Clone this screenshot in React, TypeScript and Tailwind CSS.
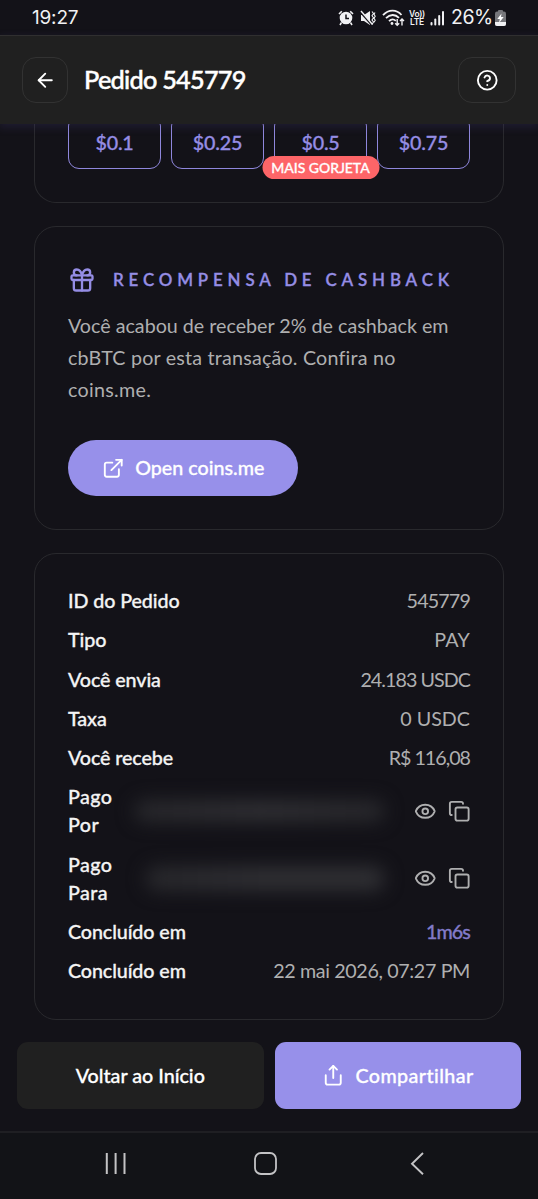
import type { ReactNode } from "react";
import { ArrowLeft, CircleQuestionMark, Copy, ExternalLink, Eye, Gift, Share } from "lucide-react";

function StatusBar() {
  return (
    <div className="flex h-[35px] shrink-0 items-center justify-between pl-[32px] pr-[32px] font-['Inter',sans-serif] text-[#f1f1f3]">
      <span className="text-[19px] leading-none tracking-[-0.2px]">19:27</span>
      <div className="flex items-center">
        <svg className="h-4 w-4" viewBox="0 0 16 16" fill="none">
          <circle cx="8" cy="8" r="6.3" fill="#f1f1f3" />
          <path d="M1 4 3.8 1.2M15 4l-2.8-2.8M3.4 12.6 2 15M12.6 12.6 14 15" stroke="#f1f1f3" strokeWidth="1.6" />
          <path d="M8 4.5V8.5H11" stroke="#131218" strokeWidth="1.5" />
        </svg>
        <svg className="ml-[6px] h-4 w-4" viewBox="0 0 16 16" fill="none">
          <path d="M1 5h3l6-4v14l-6-4H1z" fill="#f1f1f3" />
          <path d="M0 1.5 12 15" stroke="#131218" strokeWidth="2" />
          <path d="M1 1 12.5 14.5" stroke="#f1f1f3" strokeWidth="1.4" />
          <path d="m12 1.5 1.5 2L12 5.7l1.5 2.1L12 10l1.5 2-1.5 2.5M15 2.5l-1 1.7 1.2 2-1.2 2 1.2 2-1.2 2" stroke="#f1f1f3" strokeWidth="1.1" />
        </svg>
        <svg className="ml-[6px] h-[18px] w-[23px]" viewBox="0 0 23 18" fill="none" stroke="#f1f1f3">
          <path d="M1 6.2C6.5.2 14.5.2 19.5 6M4 9.2c4-4.2 9.3-4.2 13-.3M7 12.2c2.2-2.3 4.7-2.3 6.8-.4" strokeWidth="1.8" />
          <circle cx="10" cy="14.5" r="1.4" fill="#f1f1f3" stroke="none" />
          <path d="M15.2 10v6.3m-2-2 2 2 2-2M20 16.5V10m-2 2 2-2 2 2" strokeWidth="1.4" />
        </svg>
        <div className="ml-[4px] flex w-[16px] flex-col items-center text-[8.5px] font-semibold leading-[8px] tracking-[-0.3px]">
          <span>Vo))</span>
          <span>LTE</span>
        </div>
        <svg className="ml-[5px] h-4 w-[15px]" viewBox="0 0 15 16" fill="#f1f1f3">
          <rect x="0.5" y="12" width="2" height="3.5" rx="1" />
          <rect x="4.3" y="8.5" width="2" height="7" rx="1" />
          <rect x="8.2" y="5" width="2" height="10.5" rx="1" />
          <rect x="12" y="1" width="2" height="14.5" rx="1" />
        </svg>
        <span className="ml-[6px] w-[44px] text-[19.5px] leading-none tracking-[-0.5px]">26%</span>
        <svg className="h-[16px] w-[11px]" viewBox="0 0 11 16">
          <rect x="3" width="5" height="3" rx="1" fill="#77777b" />
          <rect y="1.5" width="11" height="14.5" rx="2" fill="#77777b" />
          <path d="M0 12h11v2a2 2 0 0 1-2 2H2a2 2 0 0 1-2-2z" fill="#f1f1f3" />
          <path d="M6.5 3.5 2.3 9h2.5L4 13l4.7-6H6z" fill="#fff" />
        </svg>
      </div>
    </div>
  );
}

function Header() {
  return (
    <header className="relative z-10 flex h-[89px] shrink-0 items-center border-t border-[#302f30] bg-[#202020] pl-[22px] pr-[22px] shadow-[0_3px_8px_1px_rgba(75,65,140,0.2)]">
      <button className="flex h-[46px] w-[46px] items-center justify-center rounded-[14px] border border-[#323232]">
        <ArrowLeft size={22.5} />
      </button>
      <h1 className="ml-[16px] text-[25.3px] font-medium leading-none tracking-[-0.75px] [-webkit-text-stroke:0.45px_currentColor]">
        Pedido 545779
      </h1>
      <button className="ml-auto flex h-[46px] w-[58px] items-center justify-center rounded-[14px] border border-[#323232]">
        <CircleQuestionMark size={22.5} />
      </button>
    </header>
  );
}

function Tip({ amount, badge }: { amount: string; badge?: string }) {
  return (
    <button className="relative flex h-[54px] flex-1 items-center justify-center rounded-[11px] border border-[#8f87dc] pt-px text-[19.7px] font-medium tracking-[-0.2px] text-[#958de4] [-webkit-text-stroke:0.3px_currentColor]">
      {amount}
      {badge && (
        <span className="absolute -bottom-[11px] left-1/2 z-10 flex h-[23px] w-[117px] -translate-x-1/2 items-center justify-center whitespace-nowrap rounded-full bg-[#fd6568] text-[14px] font-medium tracking-[-0.05px] text-white">
          {badge}
        </span>
      )}
    </button>
  );
}

const labelClass = "font-medium text-[#f4f4f4] [-webkit-text-stroke:0.3px_currentColor]";

function Row({ label, children, spacing = "" }: { label: string; children: ReactNode; spacing?: string }) {
  return (
    <div className="flex justify-between leading-[28px]">
      <span className={`${labelClass} tracking-[-0.1px]`}>{label}</span>
      <span className={`text-[#afafb0] ${spacing}`}>{children}</span>
    </div>
  );
}

function HiddenRow({ label, wide }: { label: string; wide?: boolean }) {
  return (
    <div className="flex items-center leading-[28px]">
      <span className={`${labelClass} w-[50px] tracking-[0.4px]`}>{label}</span>
      <div className="flex flex-1 justify-end pr-[29px]">
        <div
          className={
            wide
              ? "h-[22px] w-[251px] rounded-full bg-linear-to-r from-[#27272b] via-[#2f2f33] to-[#27272b] blur-[9px]"
              : "h-[25px] w-[240px] rounded-full bg-linear-to-r from-[#27272b] via-[#2f2f33] to-[#2f2f33] blur-[9px]"
          }
        />
      </div>
      <div className="flex items-center gap-[11px] text-[#afafb0]">
        <Eye size={22.5} />
        <Copy size={22.5} />
      </div>
    </div>
  );
}

export default function App() {
  return (
    <div className="flex h-[1199px] w-[538px] flex-col overflow-hidden bg-[#131218] font-['Lato',sans-serif] text-[19.7px] text-white">
      <StatusBar />
      <Header />
      <main className="flex flex-col px-[34px]">
        <section className="-mt-px flex h-[80px] flex-col justify-end rounded-b-[22px] border border-t-0 border-[#29292d] px-[33px] pb-[33px]">
          <div className="flex gap-[10px]">
            <Tip amount="$0.1" />
            <Tip amount="$0.25" />
            <Tip amount="$0.5" badge="MAIS GORJETA" />
            <Tip amount="$0.75" />
          </div>
        </section>

        <section className="mt-[23px] flex h-[304px] flex-col items-start rounded-[22px] border border-[#29292d] px-[33px] pt-[39px]">
          <div className="flex h-[28px] items-center gap-[17px] text-[#958de4]">
            <Gift size={28} />
            <h2 className="whitespace-nowrap text-[16.9px] font-semibold tracking-[4.85px] [-webkit-text-stroke:0.3px_currentColor]">
              RECOMPENSA DE CASHBACK
            </h2>
          </div>
          <p className="mt-[16px] whitespace-nowrap leading-[32px] text-[#afafb0]">
            Você acabou de receber 2% de cashback em
            <br />
            <span className="tracking-[0.2px]">cbBTC por esta transação. Confira no</span>
            <br />
            <span className="tracking-[0.3px]">coins.me.</span>
          </p>
          <button className="mt-[34px] flex h-[56px] w-[230px] items-center justify-center gap-[11px] rounded-full bg-[#9790ea] font-medium [&>span]:[-webkit-text-stroke:0.3px_currentColor]">
            <ExternalLink size={22.5} />
            <span>Open coins.me</span>
          </button>
        </section>

        <section className="mt-[23px] flex h-[467px] flex-col gap-[11.25px] rounded-[22px] border border-[#29292d] px-[33px] pt-[33px]">
          <Row label="ID do Pedido" spacing="tracking-[-0.85px]">545779</Row>
          <Row label="Tipo" spacing="tracking-[0.2px]">PAY</Row>
          <Row label="Você envia" spacing="tracking-[-0.95px]">24.183 USDC</Row>
          <Row label="Taxa">0 USDC</Row>
          <Row label="Você recebe" spacing="tracking-[-1px]">R$ 116,08</Row>
          <HiddenRow label="Pago Por" wide />
          <HiddenRow label="Pago Para" />
          <Row label="Concluído em">
            <span className="font-medium tracking-[-0.9px] text-[#827ac8] [-webkit-text-stroke:0.3px_currentColor]">1m6s</span>
          </Row>
          <Row label="Concluído em" spacing="tracking-[-0.37px]">22 mai 2026, 07:27 PM</Row>
        </section>
      </main>

      <div className="mt-[22px] flex gap-[11px] px-[17px] font-medium [-webkit-text-stroke:0.3px_currentColor]">
        <button className="flex h-[67px] flex-1 items-center justify-center rounded-[11px] bg-[#202020]">Voltar ao Início</button>
        <button className="flex h-[67px] flex-1 items-center justify-center gap-[11px] rounded-[11px] bg-[#9790ea]">
          <Share size={22.5} />
          <span className="tracking-[0.4px]">Compartilhar</span>
        </button>
      </div>

      <nav className="mt-auto flex h-[68px] items-start border-t-2 border-[#1f1f23] bg-[#121317] pl-[105px] pt-[19px]">
        <svg className="h-[23px] w-[22px]" viewBox="0 0 22 23" fill="none" stroke="#c3c3c5" strokeWidth="2">
          <path d="M1.8 1v21M10.6 1v21M19.5 1v21" />
        </svg>
        <svg className="ml-[127px] h-[23px] w-[23px]" viewBox="0 0 23 23" fill="none" stroke="#c3c3c5" strokeWidth="1.8">
          <rect x="1" y="1" width="21" height="21" rx="6" />
        </svg>
        <svg className="ml-[133px] h-[23px] w-[14px]" viewBox="0 0 14 23" fill="none" stroke="#c3c3c5" strokeWidth="1.9">
          <path d="M13 1 2 11.7 13 22.3" />
        </svg>
      </nav>
    </div>
  );
}
